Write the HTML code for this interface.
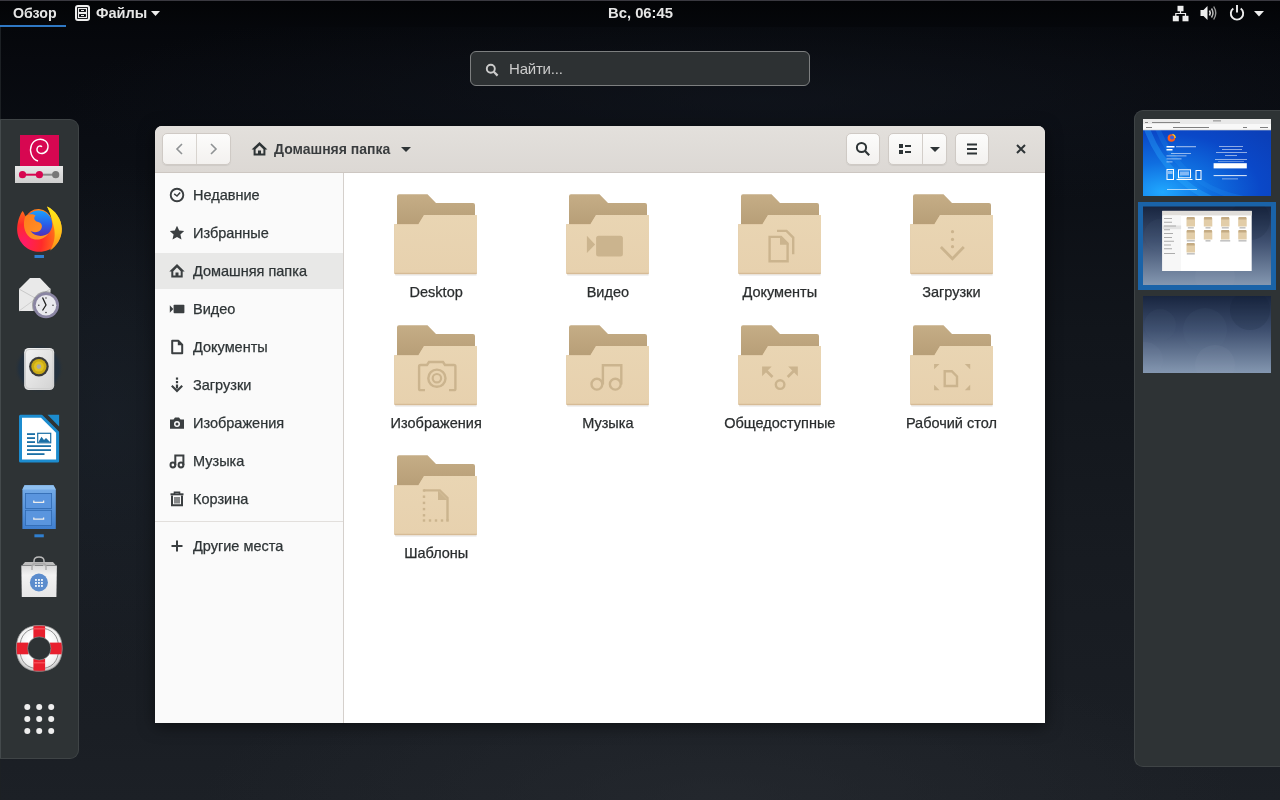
<!DOCTYPE html>
<html><head><meta charset="utf-8">
<style>
*{margin:0;padding:0;box-sizing:border-box}
html,body{width:1280px;height:800px;overflow:hidden}
body{position:relative;font-family:"Liberation Sans",sans-serif;background:#0b0e14}
.abs{position:absolute}
#bg{left:0;top:0;width:1280px;height:800px;
 background:
  radial-gradient(ellipse 520px 150px at 720px 800px, rgba(40,44,50,0.6), rgba(40,44,50,0) 100%),
  radial-gradient(ellipse 160px 260px at 110px 420px, rgba(30,38,48,0.45), rgba(30,38,48,0) 100%),
  radial-gradient(ellipse 700px 110px at 760px 100px, rgba(20,25,34,0.55), rgba(20,25,34,0) 100%),
  linear-gradient(180deg,#05070b 0px,#05070b 27px,#07090e 60px,#0a0d13 140px,#11151b 330px,#171b21 560px,#1a1e24 730px,#1c2026 800px);}
#topbar{left:0;top:0;width:1280px;height:27px;background:linear-gradient(#030406,#05070b);border-top:1px solid #3a3940}
.tb{color:#e6e6e6;font-weight:bold;font-size:14.2px;top:5px;white-space:nowrap;line-height:17px}
#search{left:470px;top:51px;width:340px;height:35px;border:1px solid #7d7f80;border-radius:6px;background:#2d3133}
#search .ph{left:38px;top:8px;color:#ccc;font-size:15px}
#dash{left:0;top:119px;width:79px;height:640px;background:#2e3335;border-radius:0 9px 9px 0;border:1px solid #3f4446;border-left:none}
#ws{left:1134px;top:110px;width:150px;height:657px;background:#2e3335;border-radius:9px 0 0 9px;border:1px solid #3f4446;border-right:none}
#win{left:155px;top:126px;width:890px;height:597px;background:#fff;border-radius:7px 7px 0 0;overflow:hidden;box-shadow:0 3px 16px rgba(0,0,0,0.5)}
#hb{left:0;top:0;width:890px;height:47px;background:linear-gradient(#e3e0dc,#dcd8d4);border-bottom:1px solid #cdc7c2}
.btn{background:linear-gradient(#fcfcfb,#f3f1ef);border:1px solid #cfcac5;border-radius:5px;box-shadow:0 1px 1px rgba(0,0,0,0.07)}
#side{left:0;top:47px;width:189px;height:550px;background:#fafafa;border-right:1px solid #d5d0cc}
.st{font-size:14.5px;color:#2e3436;white-space:nowrap;line-height:17px;-webkit-text-stroke:0.25px #2e3436}
.si .t{position:absolute;left:38px;top:10px;font-size:14.5px;color:#2e3436;white-space:nowrap}
.si svg{position:absolute;left:14px;top:11px}
.fl{font-size:14.5px;color:#2a2d2e;white-space:nowrap;text-align:center;line-height:17px;-webkit-text-stroke:0.25px #2a2d2e}
</style></head><body><div id="root" style="position:absolute;left:0;top:0;width:1280px;height:800px;will-change:transform">
<div id="bg" class="abs"></div>
<div id="topbar" class="abs"></div>
<div class="abs tb" style="left:13px">Обзор</div>
<div class="abs" style="left:0;top:25px;width:66px;height:2px;background:#2f78c4"></div>
<svg class="abs" style="left:75px;top:5px" width="15" height="16" viewBox="0 0 15 16"><rect x="1" y="1" width="13" height="14" rx="2" fill="none" stroke="#eee" stroke-width="2"/><rect x="3.5" y="3.5" width="8" height="4" fill="none" stroke="#eee" stroke-width="1.2"/><rect x="3.5" y="8.5" width="8" height="4" fill="none" stroke="#eee" stroke-width="1.2"/><path d="M6 5.5 L9 5.5 M6 10.5 L9 10.5" stroke="#eee" stroke-width="1"/></svg>
<div class="abs tb" style="left:96px;font-size:14.6px">Файлы</div>
<svg class="abs" style="left:151px;top:11px" width="9" height="5" viewBox="0 0 9 5"><path d="M0 0 L9 0 L4.5 5 Z" fill="#eee"/></svg>
<svg class="abs" style="left:1172px;top:5px" width="17" height="17" viewBox="0 0 17 17"><rect x="5.5" y="0.8" width="6" height="5.5" fill="#eee"/><rect x="0.8" y="10.8" width="6" height="5.5" fill="#eee"/><rect x="10.5" y="10.8" width="6" height="5.5" fill="#eee"/><path d="M8.5 6 L8.5 8.5 M3.8 11 L3.8 8.5 L13.5 8.5 L13.5 11" fill="none" stroke="#eee" stroke-width="1.2"/></svg>
<svg class="abs" style="left:1200px;top:5px" width="17" height="16" viewBox="0 0 17 16"><path d="M0.5 5 L3.5 5 L7.5 1 L7.5 15 L3.5 11 L0.5 11 Z" fill="#eee"/><path d="M9.5 5.5 Q11 8 9.5 10.5" fill="none" stroke="#ddd" stroke-width="1.6"/><path d="M11.5 3.5 Q14.5 8 11.5 12.5" fill="none" stroke="#bbb" stroke-width="1.5"/><path d="M13.7 1.5 Q17.8 8 13.7 14.5" fill="none" stroke="#999" stroke-width="1.4"/></svg>
<svg class="abs" style="left:1229px;top:4px" width="16" height="17" viewBox="0 0 16 17"><path d="M4.3 4.5 A6.2 6.2 0 1 0 11.7 4.5" fill="none" stroke="#eee" stroke-width="1.9"/><path d="M8 1 L8 8.5" stroke="#eee" stroke-width="1.9"/></svg>
<svg class="abs" style="left:1254px;top:11px" width="10" height="6" viewBox="0 0 10 6"><path d="M0 0 L10 0 L5 5.5 Z" fill="#eee"/></svg>
<div class="abs tb" style="left:608px;font-size:14.8px;top:5px">Вс, 06:45</div>

<div id="search" class="abs"><svg class="abs" style="left:14px;top:11px" width="14" height="14" viewBox="0 0 14 14"><circle cx="5.8" cy="5.8" r="4" fill="none" stroke="#ccc" stroke-width="1.9"/><path d="M8.8 8.8 L12.6 12.6" stroke="#ccc" stroke-width="2.2"/></svg><div class="abs ph" style="letter-spacing:-0.2px">Найти...</div></div>

<div class="abs" style="left:0;top:27px;width:1px;height:773px;background:#1c2024"></div>
<div id="dash" class="abs"></div>
<div class="abs" style="left:0;top:120px;width:1px;height:638px;background:#444a4c"></div>
<svg class="abs" style="left:0;top:0" width="80" height="800" viewBox="0 0 80 800">
<defs>
 <radialGradient id="ffo" cx="0.15" cy="0.8" r="1.0"><stop offset="0" stop-color="#ff1a6a"/><stop offset="0.4" stop-color="#ff2a2a"/><stop offset="0.7" stop-color="#ff6a1a"/><stop offset="1" stop-color="#ffae1a"/></radialGradient><linearGradient id="ffy" x1="0" y1="0" x2="0" y2="1"><stop offset="0" stop-color="#ffec1a"/><stop offset="0.6" stop-color="#ffc21a"/><stop offset="1" stop-color="#ff8a1a"/></linearGradient><linearGradient id="ffh" x1="0" y1="0" x2="1" y2="1"><stop offset="0" stop-color="#ff7a1a"/><stop offset="1" stop-color="#ff9a2a"/></linearGradient>
 <linearGradient id="ffb" x1="0" y1="0" x2="0" y2="1"><stop offset="0" stop-color="#1aa0ff"/><stop offset="0.55" stop-color="#2a5ae6"/><stop offset="1" stop-color="#5a28b0"/></linearGradient>
 <linearGradient id="gbar" x1="0" y1="0" x2="0" y2="1"><stop offset="0" stop-color="#e8e8e8"/><stop offset="1" stop-color="#cfcfcf"/></linearGradient>
 <linearGradient id="cab" x1="0" y1="0" x2="0" y2="1"><stop offset="0" stop-color="#78aee8"/><stop offset="1" stop-color="#3f7fd0"/></linearGradient>
 <linearGradient id="bag" x1="0" y1="0" x2="0" y2="1"><stop offset="0" stop-color="#d9d9d9"/><stop offset="0.3" stop-color="#f2f2f2"/><stop offset="1" stop-color="#e6e6e6"/></linearGradient>
 <linearGradient id="rbx" x1="0" y1="0" x2="1" y2="1"><stop offset="0" stop-color="#f4f4f4"/><stop offset="1" stop-color="#d2d2d2"/></linearGradient><radialGradient id="halo" cx="0.5" cy="0.5" r="0.5"><stop offset="0" stop-color="#1f2c3a"/><stop offset="0.8" stop-color="#23303d"/><stop offset="1" stop-color="#2e3335" stop-opacity="0"/></radialGradient>
</defs>
<!-- debian installer -->
<rect x="20" y="135" width="39" height="31" fill="#d70751"/>
<path d="M38 161 C31.5 159 29 151 31.5 145 C34 139.5 41 137.5 45.5 141 C49.5 144.5 48.5 151 44 153 C40.5 154.5 36.5 152.5 37 148.8 C37.4 146 40.5 145.2 42 146.8" fill="none" stroke="#fff" stroke-width="1.4"/>
<rect x="15" y="166" width="48" height="17" fill="url(#gbar)"/>
<path d="M22.5 174.7 L39.4 174.7" stroke="#d70751" stroke-width="2"/>
<path d="M39.4 174.7 L55.7 174.7" stroke="#8a8a8a" stroke-width="2"/>
<circle cx="22.5" cy="174.7" r="3.6" fill="#d70751"/><circle cx="39.4" cy="174.7" r="3.6" fill="#d70751"/><circle cx="55.7" cy="174.7" r="3.6" fill="#777"/>
<!-- firefox -->
<path d="M22.5 211 C18 218 17 225 17.2 231 C18 243 28 251.8 39.5 251.8 C52 251.8 61.8 242 61.8 229 C61.8 219 55 210 47 206.4 C49.5 211 51 215 51.5 219.5 A13.6 13.6 0 0 0 25.5 218 C25 215 24 212.5 22.5 211 Z" fill="url(#ffo)"/>
<path d="M47 206.4 C55 210 61.8 219 61.8 229 C61.8 238 57 246 50 250.5 C54.5 243 55.8 235 53.8 227 C52.2 219.5 50.5 213 47 206.4 Z" fill="url(#ffy)"/>
<circle cx="38.6" cy="224" r="13.6" fill="url(#ffb)"/>
<path d="M25.3 216 C29 213.5 33.5 214 35.5 215.5 C33 218 34.5 221 37.5 221.8 C41.5 222.5 43 226 41.2 229 C39 232.5 34 233 30.5 231 C34.5 236.5 42.5 237.5 48.5 233.5 C44.5 239.5 35.5 241.5 30 237.5 C24 233 22.5 224 25.3 216 Z" fill="url(#ffh)"/>
<rect x="34.5" y="255" width="9.5" height="3" fill="#2f7fd0"/>
<!-- evolution -->
<path d="M19 289 L30 278 L40 278 L50.5 289 L50.5 311 L19 311 Z" fill="#e9e9e9"/>
<path d="M19 289 L35 298 L50.5 289" fill="none" stroke="#c8c8c8" stroke-width="1"/>
<path d="M19 311 L34 300 M50.5 311 L38 300" stroke="#d0d0d0" stroke-width="1"/>
<circle cx="46" cy="305.3" r="14" fill="#2a2e30" opacity="0.35"/>
<circle cx="46" cy="305.3" r="13" fill="#8a85a3"/>
<circle cx="46" cy="305.3" r="10.3" fill="#e9e9ee"/>
<path d="M42.5 297.5 L46 305 L42.5 310.5" fill="none" stroke="#222" stroke-width="1.3"/>
<circle cx="46" cy="298" r="0.8" fill="#444"/><circle cx="53" cy="305.3" r="0.8" fill="#444"/><circle cx="46" cy="312.5" r="0.8" fill="#444"/><circle cx="38.8" cy="305.3" r="0.8" fill="#444"/>
<!-- rhythmbox -->
<circle cx="39" cy="368.5" r="25" fill="url(#halo)"/>
<rect x="24.2" y="348" width="30" height="42" rx="4.5" fill="url(#rbx)"/>
<rect x="25.5" y="349.5" width="27.5" height="39" rx="3.5" fill="none" stroke="#cfcfcf" stroke-width="1"/>
<circle cx="38.9" cy="366.6" r="9.8" fill="#3b3b3b"/>
<circle cx="38.9" cy="366.6" r="7.6" fill="#c9a915"/><circle cx="38.9" cy="366.6" r="5" fill="#e0c020"/>
<circle cx="38.9" cy="366.6" r="2.3" fill="#a9a9a9"/>
<!-- writer -->
<path d="M20.5 416.2 L41.5 416.2 L57.6 432.3 L57.6 461 L20.5 461 Z" fill="#fff" stroke="#1c8ccf" stroke-width="3" stroke-linejoin="round"/>
<path d="M47.5 414.7 L59.1 414.7 L59.1 426.4 Z" fill="#1c8ccf"/>
<g fill="#1a6fa6"><rect x="27" y="433.2" width="8" height="1.8"/><rect x="27" y="437.2" width="8" height="1.8"/><rect x="27" y="441.2" width="8" height="1.8"/><rect x="27" y="445.2" width="24" height="1.8"/><rect x="27" y="449.2" width="24" height="1.8"/><rect x="27" y="453.2" width="17.5" height="1.8"/></g>
<rect x="37.7" y="433.3" width="13" height="9.5" fill="none" stroke="#1a6fa6" stroke-width="1.2"/>
<path d="M38.3 442.3 L41.5 436.8 L44 440 L46 438 L50.3 442.3 Z" fill="#1a6fa6"/>
<!-- files cabinet -->
<path d="M24.5 485.2 L53.5 485.2 L55.8 489.5 L55.8 529 L22.4 529 L22.4 489.5 Z" fill="url(#cab)"/>
<path d="M24.5 485.2 L53.5 485.2 L55.8 489.5 L22.4 489.5 Z" fill="#8fc0f0"/>
<rect x="25.4" y="493.4" width="26.2" height="15" fill="#5a95de" stroke="#2f68b0" stroke-width="0.8"/>
<rect x="25.4" y="510.3" width="26.2" height="15.3" fill="#5a95de" stroke="#2f68b0" stroke-width="0.8"/>
<path d="M33.8 500.6 L33.8 502.4 L43.6 502.4 L43.6 500.6" fill="none" stroke="#eee" stroke-width="1.3"/>
<path d="M33.8 517.4 L33.8 519.2 L43.6 519.2 L43.6 517.4" fill="none" stroke="#eee" stroke-width="1.3"/>
<rect x="34.4" y="534.3" width="9.4" height="3" fill="#2f7fd0"/>
<!-- software bag -->
<path d="M34 566 L34 561 Q34 557 39 557 Q44 557 44 561 L44 566" fill="none" stroke="#bbb" stroke-width="1.5"/>
<path d="M22.5 565 L25 562 L53 562 L55.5 565 Z" fill="#bdbdbd"/>
<path d="M21.3 565.6 L56.9 565.6 L56.4 597.1 L21.8 597.1 Z" fill="url(#bag)"/>
<path d="M32 570 L32 567 Q32 563.5 35.5 563.5 L42.5 563.5 Q46 563.5 46 567 L46 570" fill="none" stroke="#aaa" stroke-width="1.4"/>
<circle cx="38.9" cy="582.5" r="9" fill="#5b8ccd"/>
<g fill="#e8f1fb"><rect x="35" y="579" width="1.9" height="1.9"/><rect x="38" y="579" width="1.9" height="1.9"/><rect x="41" y="579" width="1.9" height="1.9"/><rect x="35" y="582" width="1.9" height="1.9"/><rect x="38" y="582" width="1.9" height="1.9"/><rect x="41" y="582" width="1.9" height="1.9"/><rect x="35" y="585" width="1.9" height="1.9"/><rect x="38" y="585" width="1.9" height="1.9"/><rect x="41" y="585" width="1.9" height="1.9"/></g>
<!-- lifebuoy -->
<defs><clipPath id="lbc"><path d="M39.25 625.5 C54 625.5 62.2 633.5 62.2 648.4 C62.2 663.3 54 671.3 39.25 671.3 C24.5 671.3 16.3 663.3 16.3 648.4 C16.3 633.5 24.5 625.5 39.25 625.5 Z"/></clipPath>
<radialGradient id="lbg" cx="0.5" cy="0.45" r="0.55"><stop offset="0.5" stop-color="#ffffff"/><stop offset="0.85" stop-color="#f0f0f0"/><stop offset="1" stop-color="#c8c8c8"/></radialGradient></defs>
<path d="M39.25 625.5 C54 625.5 62.2 633.5 62.2 648.4 C62.2 663.3 54 671.3 39.25 671.3 C24.5 671.3 16.3 663.3 16.3 648.4 C16.3 633.5 24.5 625.5 39.25 625.5 Z" fill="url(#lbg)"/>
<path d="M39.25 628 C51.5 628 58.7 635 58.7 648.4 C58.7 661.8 51.5 668.8 39.25 668.8 C27 668.8 19.8 661.8 19.8 648.4 C19.8 635 27 628 39.25 628 Z" fill="none" stroke="#7a7a7a" stroke-width="0.8"/>
<g clip-path="url(#lbc)">
<rect x="33.4" y="624" width="11.7" height="14" fill="#e8202e"/><rect x="33.4" y="659" width="11.7" height="14" fill="#e8202e"/>
<rect x="15" y="642.6" width="13.5" height="11.7" fill="#e8202e"/><rect x="50" y="642.6" width="13.5" height="11.7" fill="#e8202e"/>
<rect x="33.4" y="628" width="11.7" height="1.5" fill="#ff6a72" opacity="0.6"/><rect x="33.4" y="662" width="11.7" height="1.5" fill="#ff6a72" opacity="0.6"/>
</g>
<path d="M39.25 625.5 C54 625.5 62.2 633.5 62.2 648.4 C62.2 663.3 54 671.3 39.25 671.3 C24.5 671.3 16.3 663.3 16.3 648.4 C16.3 633.5 24.5 625.5 39.25 625.5 Z" fill="none" stroke="#8d8d8d" stroke-width="0.7"/>
<circle cx="39.25" cy="648.4" r="11.6" fill="#2e3335" stroke="#9a9a9a" stroke-width="0.6"/>
<!-- app grid -->
<g fill="#eeeeee">
<circle cx="27.3" cy="706.9" r="3"/><circle cx="39.2" cy="706.9" r="3"/><circle cx="51.2" cy="706.9" r="3"/>
<circle cx="27.3" cy="718.9" r="3"/><circle cx="39.2" cy="718.9" r="3"/><circle cx="51.2" cy="718.9" r="3"/>
<circle cx="27.3" cy="730.9" r="3"/><circle cx="39.2" cy="730.9" r="3"/><circle cx="51.2" cy="730.9" r="3"/>
</g>
</svg>
<div id="ws" class="abs"></div>
<svg class="abs" style="left:1134px;top:110px" width="146" height="280" viewBox="1134 110 146 280">
<defs>
 <clipPath id="c3"><rect x="1143" y="296" width="128" height="77"/></clipPath><clipPath id="c2"><rect x="1143" y="206.5" width="128" height="78.5"/></clipPath><linearGradient id="wall" x1="0" y1="0" x2="0" y2="1"><stop offset="0" stop-color="#18253f"/><stop offset="0.45" stop-color="#3f5070"/><stop offset="1" stop-color="#8497b0"/></linearGradient>
 <radialGradient id="ffbg" cx="0.15" cy="0.95" r="1.1"><stop offset="0" stop-color="#20a8ff"/><stop offset="0.35" stop-color="#0f6ee0"/><stop offset="0.7" stop-color="#0a48c8"/><stop offset="1" stop-color="#0b3fb8"/></radialGradient>
</defs>
<!-- thumb 1: firefox -->
<rect x="1143" y="119" width="128" height="77" fill="url(#ffbg)"/>
<clipPath id="c1"><rect x="1143" y="130" width="128" height="66"/></clipPath>
<g clip-path="url(#c1)">
<circle cx="1262" cy="88" r="122" fill="none" stroke="#2ab0ff" stroke-width="6" opacity="0.35"/>
<circle cx="1262" cy="88" r="112" fill="none" stroke="#1e90f0" stroke-width="5" opacity="0.25"/>
</g>
<rect x="1143" y="119" width="128" height="5" fill="#e9e9e9"/>
<rect x="1143" y="124" width="128" height="6" fill="#f8f8f8"/>
<rect x="1143" y="129.6" width="128" height="0.7" fill="#cfcfcf"/>
<g fill="#444" opacity="0.75"><rect x="1145" y="122" width="3" height="0.8"/><rect x="1152" y="122" width="28" height="0.8"/><rect x="1213" y="120.5" width="8" height="0.8"/><rect x="1146" y="127" width="6" height="0.9"/><rect x="1173" y="127" width="36" height="0.9"/><rect x="1243" y="127" width="4" height="0.9"/><rect x="1260" y="127" width="8" height="0.9"/></g>
<circle cx="1171.4" cy="138" r="3.8" fill="#ff5a1a"/><circle cx="1172" cy="137.4" r="2" fill="#3a5fe0"/><path d="M1172.5 134.3 A3.8 3.8 0 0 1 1175.2 138" fill="none" stroke="#ffcc1a" stroke-width="1.2"/>
<g fill="#fff">
<rect x="1166.5" y="146" width="8" height="1.5"/><rect x="1176" y="146.3" width="20" height="0.9" opacity="0.75"/><rect x="1166.5" y="149" width="6" height="1.5"/>
<rect x="1171" y="153" width="20" height="0.8" opacity="0.7"/><rect x="1166.5" y="155.5" width="20" height="0.8" opacity="0.7"/><rect x="1166.5" y="158.5" width="15" height="0.8" opacity="0.7"/><rect x="1166.5" y="161.5" width="6" height="0.8" opacity="0.7"/>
<rect x="1167" y="189" width="30" height="0.9" opacity="0.7"/>
<rect x="1219" y="146" width="24" height="0.9" opacity="0.6"/><rect x="1222" y="149" width="20" height="0.9" opacity="0.6"/><rect x="1216" y="152" width="31" height="0.9" opacity="0.6"/><rect x="1225" y="155" width="12" height="0.9" opacity="0.6"/><rect x="1215" y="159" width="32" height="0.9" opacity="0.6"/><rect x="1218" y="161" width="26" height="0.7" opacity="0.5"/>
<rect x="1213.6" y="163.2" width="33.2" height="5.2"/><rect x="1213.6" y="175.2" width="33.2" height="0.9"/><rect x="1222" y="178.5" width="16" height="0.8" opacity="0.6"/></g>
<g fill="none" stroke="#fff" stroke-width="1">
<rect x="1167" y="169.5" width="6.5" height="10"/><rect x="1178.5" y="169.8" width="12" height="8"/><path d="M1176.5 179.5 L1192.5 179.5"/><rect x="1196" y="170.5" width="5" height="9"/>
</g>
<g fill="#cfe3ff" opacity="0.6"><rect x="1168" y="171" width="4.5" height="3"/><rect x="1180" y="171.5" width="9" height="4"/></g>
<!-- thumb 2: selected -->
<rect x="1138" y="202" width="138" height="88" fill="#1a63a8"/>
<rect x="1143" y="206.5" width="128" height="78.5" fill="url(#wall)"/>
<g clip-path="url(#c2)">
<circle cx="1160" cy="235" r="16" fill="#5a6c8a" opacity="0.09"/>
<circle cx="1250" cy="220" r="20" fill="#0e1a33" opacity="0.14"/>
<circle cx="1215" cy="277" r="20" fill="#9aaac0" opacity="0.09"/>
</g>
<rect x="1162.3" y="210.9" width="89.4" height="60.1" fill="#fff"/>
<rect x="1162.3" y="210.9" width="89.4" height="4.6" fill="#e0ddd9"/>
<rect x="1162.3" y="215.5" width="18.8" height="55.5" fill="#f7f7f7"/>
<rect x="1162.3" y="225.5" width="18.8" height="3.6" fill="#e3e3e3"/>
<g fill="#999"><rect x="1164" y="218" width="8" height="0.8"/><rect x="1164" y="221.8" width="8" height="0.8"/><rect x="1164" y="225.6" width="12" height="0.8"/><rect x="1164" y="229.4" width="6" height="0.8"/><rect x="1164" y="233.2" width="9" height="0.8"/><rect x="1164" y="237" width="8" height="0.8"/><rect x="1164" y="240.8" width="10" height="0.8"/><rect x="1164" y="244.6" width="7" height="0.8"/><rect x="1164" y="248.4" width="8" height="0.8"/><rect x="1164" y="253" width="11" height="0.8"/></g>
<g fill="#e2cda8">
<rect x="1186.5" y="218" width="8.5" height="8.5"/><rect x="1203.8" y="218" width="8.5" height="8.5"/><rect x="1221" y="218" width="8.5" height="8.5"/><rect x="1238.2" y="218" width="8.5" height="8.5"/>
<rect x="1186.5" y="231" width="8.5" height="8.5"/><rect x="1203.8" y="231" width="8.5" height="8.5"/><rect x="1221" y="231" width="8.5" height="8.5"/><rect x="1238.2" y="231" width="8.5" height="8.5"/>
<rect x="1186.5" y="244" width="8.5" height="8.5"/>
</g>
<g fill="#c4ab83">
<rect x="1186.8" y="217" width="7.8" height="2.5"/><rect x="1204.1" y="217" width="7.8" height="2.5"/><rect x="1221.3" y="217" width="7.8" height="2.5"/><rect x="1238.5" y="217" width="7.8" height="2.5"/>
<rect x="1186.8" y="230" width="7.8" height="2.5"/><rect x="1204.1" y="230" width="7.8" height="2.5"/><rect x="1221.3" y="230" width="7.8" height="2.5"/><rect x="1238.5" y="230" width="7.8" height="2.5"/>
<rect x="1186.8" y="243" width="7.8" height="2.5"/>
</g>
<rect x="1187.8" y="227.5" width="6" height="0.8" fill="#888"/><rect x="1205.5" y="227.5" width="5" height="0.8" fill="#888"/><rect x="1221.8" y="227.5" width="7" height="0.8" fill="#888"/><rect x="1239.5" y="227.5" width="6" height="0.8" fill="#888"/><rect x="1186.8" y="240.5" width="8" height="0.8" fill="#888"/><rect x="1205.5" y="240.5" width="5" height="0.8" fill="#888"/><rect x="1220.2" y="240.5" width="10" height="0.8" fill="#888"/><rect x="1238.5" y="240.5" width="8" height="0.8" fill="#888"/><rect x="1186.8" y="253.5" width="8" height="0.8" fill="#888"/>
<!-- thumb 3 -->
<rect x="1143" y="296" width="128" height="77" fill="url(#wall)"/>
<g clip-path="url(#c3)">
<circle cx="1160" cy="325" r="16" fill="#5a6c8a" opacity="0.09"/>
<circle cx="1205" cy="330" r="22" fill="#6a7d9a" opacity="0.08"/>
<circle cx="1250" cy="310" r="20" fill="#0e1a33" opacity="0.14"/>
<circle cx="1215" cy="365" r="20" fill="#9aaac0" opacity="0.09"/>
<circle cx="1145" cy="360" r="18" fill="#8a9bb2" opacity="0.07"/>
</g>
</svg>


<div id="win" class="abs">

  <div id="hb" class="abs">
    <div class="abs btn" style="left:7px;top:7px;width:69px;height:32px"></div>
    <div class="abs" style="left:41px;top:8px;width:1px;height:30px;background:#d8d4cf"></div>
    <svg class="abs" style="left:17px;top:15px" width="16" height="16" viewBox="0 0 16 16"><path d="M10 3 L5 8 L10 13" fill="none" stroke="#8f9294" stroke-width="1.6"/></svg>
    <svg class="abs" style="left:50px;top:15px" width="16" height="16" viewBox="0 0 16 16"><path d="M6 3 L11 8 L6 13" fill="none" stroke="#8f9294" stroke-width="1.6"/></svg>
    <svg class="abs" style="left:96px;top:15px" width="17" height="16" viewBox="0 0 17 16"><path d="M8.5 1 L0.6 8.6 L2.6 8.6 L2.6 14.6 L14.4 14.6 L14.4 8.6 L16.4 8.6 Z M4.6 8.2 L8.5 4.4 L12.4 8.2 L12.4 12.6 L10 12.6 L10 9.6 L7 9.6 L7 12.6 L4.6 12.6 Z" fill="#2e3436" fill-rule="evenodd"/></svg>
    <div class="abs" style="left:119px;top:15px;font-size:14px;font-weight:bold;color:#393c3e;white-space:nowrap">Домашняя папка</div>
    <svg class="abs" style="left:246px;top:21px" width="10" height="5" viewBox="0 0 10 5"><path d="M0 0 L10 0 L5 5 Z" fill="#2e3436"/></svg>
    <div class="abs btn" style="left:691px;top:7px;width:34px;height:32px"></div>
    <svg class="abs" style="left:700px;top:15px" width="16" height="16" viewBox="0 0 16 16"><circle cx="6.5" cy="6.5" r="4.6" fill="none" stroke="#2e3436" stroke-width="2"/><path d="M9.8 9.8 L14.2 14.2" stroke="#2e3436" stroke-width="2.2"/></svg>
    <div class="abs btn" style="left:733px;top:7px;width:59px;height:32px"></div>
    <div class="abs" style="left:767px;top:8px;width:1px;height:30px;background:#d3cec9"></div>
    <svg class="abs" style="left:743px;top:17px" width="14" height="12" viewBox="0 0 14 12"><rect x="1" y="1" width="4" height="4" fill="#2e3436"/><rect x="1" y="7" width="4" height="4" fill="#2e3436"/><rect x="7" y="2" width="6" height="2" fill="#2e3436"/><rect x="7" y="8" width="6" height="2" fill="#2e3436"/></svg>
    <svg class="abs" style="left:775px;top:21px" width="10" height="5" viewBox="0 0 10 5"><path d="M0 0 L10 0 L5 5 Z" fill="#2e3436"/></svg>
    <div class="abs btn" style="left:800px;top:7px;width:34px;height:32px"></div>
    <svg class="abs" style="left:811px;top:16px" width="12" height="14" viewBox="0 0 12 14"><rect x="1" y="1.5" width="10" height="2" fill="#2e3436"/><rect x="1" y="6" width="10" height="2" fill="#2e3436"/><rect x="1" y="10.5" width="10" height="2" fill="#2e3436"/></svg>
    <svg class="abs" style="left:860px;top:17px" width="12" height="12" viewBox="0 0 12 12"><path d="M2 2 L10 10 M10 2 L2 10" stroke="#2e3436" stroke-width="2"/></svg>
  </div>
  <div id="side" class="abs">
    <div class="abs" style="left:0;top:80px;width:188px;height:36px;background:#e8e8e7"></div>
    <svg class="abs" style="left:14px;top:14px" width="16" height="16" viewBox="0 0 16 16"><circle cx="8" cy="8" r="6.3" fill="none" stroke="#3b3f41" stroke-width="1.9"/><path d="M5.2 6.8 L8 9 L11.2 5.6" fill="none" stroke="#3b3f41" stroke-width="1.5"/></svg>
    <div class="abs st" style="left:38px;top:14px">Недавние</div>
    <svg class="abs" style="left:14px;top:52px" width="16" height="16" viewBox="0 0 16 16"><path d="M8 0.8 L10.2 5.5 L15.2 6 L11.4 9.4 L12.5 14.5 L8 11.9 L3.5 14.5 L4.6 9.4 L0.8 6 L5.8 5.5 Z" fill="#3b3f41"/></svg>
    <div class="abs st" style="left:38px;top:52px">Избранные</div>
    <svg class="abs" style="left:14px;top:90px" width="16" height="16" viewBox="0 0 16 16"><path d="M8 1 L0.3 8.6 L2.3 8.6 L2.3 14.6 L13.7 14.6 L13.7 8.6 L15.7 8.6 Z M4.3 8.2 L8 4.5 L11.7 8.2 L11.7 12.6 L9.5 12.6 L9.5 9.6 L6.5 9.6 L6.5 12.6 L4.3 12.6 Z" fill="#3b3f41" fill-rule="evenodd"/></svg>
    <div class="abs st" style="left:38px;top:90px">Домашняя папка</div>
    <svg class="abs" style="left:14px;top:128px" width="16" height="16" viewBox="0 0 16 16"><path d="M0.8 4.3 L4.3 8 L0.8 11.7 Z" fill="#3b3f41"/><rect x="4.6" y="3.8" width="10.8" height="8.4" rx="0.8" fill="#3b3f41"/></svg>
    <div class="abs st" style="left:38px;top:128px">Видео</div>
    <svg class="abs" style="left:14px;top:166px" width="16" height="16" viewBox="0 0 16 16"><path d="M3.2 1.8 L9.3 1.8 L13.2 5.7 L13.2 14.2 L3.2 14.2 Z" fill="none" stroke="#3b3f41" stroke-width="2" stroke-linejoin="round"/><path d="M8.8 1.5 L13.5 6.2 L8.8 6.2 Z" fill="#3b3f41"/></svg>
    <div class="abs st" style="left:38px;top:166px">Документы</div>
    <svg class="abs" style="left:14px;top:204px" width="16" height="16" viewBox="0 0 16 16"><rect x="6.9" y="0.5" width="2.2" height="2.2" fill="#3b3f41"/><rect x="6.9" y="4" width="2.2" height="2.2" fill="#3b3f41"/><rect x="6.9" y="7.5" width="2.2" height="4" fill="#3b3f41"/><path d="M2.8 8.8 L8 14 L13.2 8.8" fill="none" stroke="#3b3f41" stroke-width="2.1"/></svg>
    <div class="abs st" style="left:38px;top:204px">Загрузки</div>
    <svg class="abs" style="left:14px;top:242px" width="16" height="16" viewBox="0 0 16 16"><path d="M1 4.5 L4.5 4.5 L6 2.5 L10 2.5 L11.5 4.5 L15 4.5 L15 13.8 L1 13.8 Z" fill="#3b3f41"/><circle cx="8" cy="9" r="3" fill="#fafafa"/><circle cx="8" cy="9" r="1.5" fill="#3b3f41"/></svg>
    <div class="abs st" style="left:38px;top:242px">Изображения</div>
    <svg class="abs" style="left:14px;top:280px" width="16" height="16" viewBox="0 0 16 16"><circle cx="3.9" cy="12" r="2.4" fill="none" stroke="#3b3f41" stroke-width="2"/><circle cx="12" cy="12" r="2.4" fill="none" stroke="#3b3f41" stroke-width="2"/><path d="M6.3 12 L6.3 2.6 L14.4 2.6 L14.4 12" fill="none" stroke="#3b3f41" stroke-width="2"/></svg>
    <div class="abs st" style="left:38px;top:280px">Музыка</div>
    <svg class="abs" style="left:14px;top:318px" width="16" height="16" viewBox="0 0 16 16"><path d="M1.5 3.3 L14.5 3.3" stroke="#3b3f41" stroke-width="2"/><path d="M5.5 3 L5.5 1.2 L10.5 1.2 L10.5 3" fill="none" stroke="#3b3f41" stroke-width="1.6"/><path d="M3 4.5 L3 14.3 L13 14.3 L13 4.5" fill="none" stroke="#3b3f41" stroke-width="2"/><path d="M6 6 L6 12.5 M8 6 L8 12.5 M10 6 L10 12.5" stroke="#3b3f41" stroke-width="1.2"/></svg>
    <div class="abs st" style="left:38px;top:318px">Корзина</div>
    <div class="abs" style="left:0;top:348px;width:188px;height:1px;background:#e2dfdc"></div>
    <svg class="abs" style="left:14px;top:365px" width="16" height="16" viewBox="0 0 16 16"><path d="M8 2.5 L8 13.5 M2.5 8 L13.5 8" stroke="#3b3f41" stroke-width="2"/></svg>
    <div class="abs st" style="left:38px;top:365px">Другие места</div>
  </div>
  <div id="main" class="abs" style="left:189px;top:47px;width:701px;height:550px">
    <div class="abs" style="left:50.4px;top:21.3px;width:88px;height:88px"><svg width="88" height="88" viewBox="0 0 88 88">
<defs>
<linearGradient id="gb" x1="0" y1="0" x2="0" y2="1"><stop offset="0" stop-color="#c5ad86"/><stop offset="1" stop-color="#b39a73"/></linearGradient>
<linearGradient id="gf" x1="0" y1="0" x2="0" y2="1"><stop offset="0" stop-color="#e9d5b3"/><stop offset="1" stop-color="#e7d1ae"/></linearGradient>
</defs>
<path d="M3 2.3 Q3 0.3 5 0.3 L33.5 0.3 L42 9 L79 9 Q81 9 81 11 L81 40 L3 40 Z" fill="url(#gb)"/>
<rect x="1" y="79" width="82" height="3" rx="1.5" fill="#000" opacity="0.06"/><path d="M0.2 30.3 L24.4 30.3 L30 21 L83 21 L83 79 Q83 80.3 81.7 80.3 L1.5 80.3 Q0.2 80.3 0.2 79 Z" fill="#d6bb96"/>
<path d="M0.2 30.3 L24.4 30.3 L30 21 L83 21 L83 78.8 L0.2 78.8 Z" fill="url(#gf)"/>

</svg></div>
    <div class="abs fl" style="left:32.2px;top:110.7px;width:120px">Desktop</div>
    <div class="abs" style="left:222.1px;top:21.3px;width:88px;height:88px"><svg width="88" height="88" viewBox="0 0 88 88">
<defs>
<linearGradient id="gb" x1="0" y1="0" x2="0" y2="1"><stop offset="0" stop-color="#c5ad86"/><stop offset="1" stop-color="#b39a73"/></linearGradient>
<linearGradient id="gf" x1="0" y1="0" x2="0" y2="1"><stop offset="0" stop-color="#e9d5b3"/><stop offset="1" stop-color="#e7d1ae"/></linearGradient>
</defs>
<path d="M3 2.3 Q3 0.3 5 0.3 L33.5 0.3 L42 9 L79 9 Q81 9 81 11 L81 40 L3 40 Z" fill="url(#gb)"/>
<rect x="1" y="79" width="82" height="3" rx="1.5" fill="#000" opacity="0.06"/><path d="M0.2 30.3 L24.4 30.3 L30 21 L83 21 L83 79 Q83 80.3 81.7 80.3 L1.5 80.3 Q0.2 80.3 0.2 79 Z" fill="#d6bb96"/>
<path d="M0.2 30.3 L24.4 30.3 L30 21 L83 21 L83 78.8 L0.2 78.8 Z" fill="url(#gf)"/>
<path d="M20.9 41.7 L29.1 50.4 L20.9 59.1 Z" fill="#cbb48e"/><rect x="30.1" y="41.8" width="26.8" height="20.7" rx="2.5" fill="#cbb48e"/>
</svg></div>
    <div class="abs fl" style="left:203.9px;top:110.7px;width:120px">Видео</div>
    <div class="abs" style="left:394.0px;top:21.3px;width:88px;height:88px"><svg width="88" height="88" viewBox="0 0 88 88">
<defs>
<linearGradient id="gb" x1="0" y1="0" x2="0" y2="1"><stop offset="0" stop-color="#c5ad86"/><stop offset="1" stop-color="#b39a73"/></linearGradient>
<linearGradient id="gf" x1="0" y1="0" x2="0" y2="1"><stop offset="0" stop-color="#e9d5b3"/><stop offset="1" stop-color="#e7d1ae"/></linearGradient>
</defs>
<path d="M3 2.3 Q3 0.3 5 0.3 L33.5 0.3 L42 9 L79 9 Q81 9 81 11 L81 40 L3 40 Z" fill="url(#gb)"/>
<rect x="1" y="79" width="82" height="3" rx="1.5" fill="#000" opacity="0.06"/><path d="M0.2 30.3 L24.4 30.3 L30 21 L83 21 L83 79 Q83 80.3 81.7 80.3 L1.5 80.3 Q0.2 80.3 0.2 79 Z" fill="#d6bb96"/>
<path d="M0.2 30.3 L24.4 30.3 L30 21 L83 21 L83 78.8 L0.2 78.8 Z" fill="url(#gf)"/>
<path d="M31.6 42.9 L43 42.9 L49.6 49.5 L49.6 67.3 L31.6 67.3 Z" fill="none" stroke="#cbb48e" stroke-width="2.4"/><path d="M42 42 L50.8 50.8 L42 50.8 Z" fill="#cbb48e"/><path d="M39 36.9 L48.5 36.9 L55.2 43.6 L55.2 60.2" fill="none" stroke="#cbb48e" stroke-width="2.4"/>
</svg></div>
    <div class="abs fl" style="left:375.8px;top:110.7px;width:120px">Документы</div>
    <div class="abs" style="left:565.6px;top:21.3px;width:88px;height:88px"><svg width="88" height="88" viewBox="0 0 88 88">
<defs>
<linearGradient id="gb" x1="0" y1="0" x2="0" y2="1"><stop offset="0" stop-color="#c5ad86"/><stop offset="1" stop-color="#b39a73"/></linearGradient>
<linearGradient id="gf" x1="0" y1="0" x2="0" y2="1"><stop offset="0" stop-color="#e9d5b3"/><stop offset="1" stop-color="#e7d1ae"/></linearGradient>
</defs>
<path d="M3 2.3 Q3 0.3 5 0.3 L33.5 0.3 L42 9 L79 9 Q81 9 81 11 L81 40 L3 40 Z" fill="url(#gb)"/>
<rect x="1" y="79" width="82" height="3" rx="1.5" fill="#000" opacity="0.06"/><path d="M0.2 30.3 L24.4 30.3 L30 21 L83 21 L83 79 Q83 80.3 81.7 80.3 L1.5 80.3 Q0.2 80.3 0.2 79 Z" fill="#d6bb96"/>
<path d="M0.2 30.3 L24.4 30.3 L30 21 L83 21 L83 78.8 L0.2 78.8 Z" fill="url(#gf)"/>
<circle cx="42.5" cy="37.7" r="1.6" fill="#cbb48e"/><circle cx="42.5" cy="45.4" r="1.6" fill="#cbb48e"/><circle cx="42.5" cy="52.7" r="1.6" fill="#cbb48e"/><path d="M30.9 53.1 L42.4 64.7 L53.8 53.1" fill="none" stroke="#cbb48e" stroke-width="2.8"/>
</svg></div>
    <div class="abs fl" style="left:547.4px;top:110.7px;width:120px">Загрузки</div>
    <div class="abs" style="left:50.4px;top:152.3px;width:88px;height:88px"><svg width="88" height="88" viewBox="0 0 88 88">
<defs>
<linearGradient id="gb" x1="0" y1="0" x2="0" y2="1"><stop offset="0" stop-color="#c5ad86"/><stop offset="1" stop-color="#b39a73"/></linearGradient>
<linearGradient id="gf" x1="0" y1="0" x2="0" y2="1"><stop offset="0" stop-color="#e9d5b3"/><stop offset="1" stop-color="#e7d1ae"/></linearGradient>
</defs>
<path d="M3 2.3 Q3 0.3 5 0.3 L33.5 0.3 L42 9 L79 9 Q81 9 81 11 L81 40 L3 40 Z" fill="url(#gb)"/>
<rect x="1" y="79" width="82" height="3" rx="1.5" fill="#000" opacity="0.06"/><path d="M0.2 30.3 L24.4 30.3 L30 21 L83 21 L83 79 Q83 80.3 81.7 80.3 L1.5 80.3 Q0.2 80.3 0.2 79 Z" fill="#d6bb96"/>
<path d="M0.2 30.3 L24.4 30.3 L30 21 L83 21 L83 78.8 L0.2 78.8 Z" fill="url(#gf)"/>
<path d="M31 65.1 L26.5 65.1 Q25.1 65.1 25.1 63.7 L25.1 41.5 Q25.1 40 26.6 40 L33 40 L35 37 L49 37 L51 40 L59.9 40 Q61.4 40 61.4 41.5 L61.4 63.7 Q61.4 65.1 60 65.1 L55 65.1" fill="none" stroke="#cbb48e" stroke-width="2.4"/><circle cx="42.9" cy="53.2" r="8.6" fill="none" stroke="#cbb48e" stroke-width="2.4"/><circle cx="42.9" cy="53.2" r="4.2" fill="none" stroke="#cbb48e" stroke-width="2.2"/>
</svg></div>
    <div class="abs fl" style="left:32.2px;top:241.7px;width:120px">Изображения</div>
    <div class="abs" style="left:222.1px;top:152.3px;width:88px;height:88px"><svg width="88" height="88" viewBox="0 0 88 88">
<defs>
<linearGradient id="gb" x1="0" y1="0" x2="0" y2="1"><stop offset="0" stop-color="#c5ad86"/><stop offset="1" stop-color="#b39a73"/></linearGradient>
<linearGradient id="gf" x1="0" y1="0" x2="0" y2="1"><stop offset="0" stop-color="#e9d5b3"/><stop offset="1" stop-color="#e7d1ae"/></linearGradient>
</defs>
<path d="M3 2.3 Q3 0.3 5 0.3 L33.5 0.3 L42 9 L79 9 Q81 9 81 11 L81 40 L3 40 Z" fill="url(#gb)"/>
<rect x="1" y="79" width="82" height="3" rx="1.5" fill="#000" opacity="0.06"/><path d="M0.2 30.3 L24.4 30.3 L30 21 L83 21 L83 79 Q83 80.3 81.7 80.3 L1.5 80.3 Q0.2 80.3 0.2 79 Z" fill="#d6bb96"/>
<path d="M0.2 30.3 L24.4 30.3 L30 21 L83 21 L83 78.8 L0.2 78.8 Z" fill="url(#gf)"/>
<circle cx="30.9" cy="59.2" r="5.4" fill="none" stroke="#cbb48e" stroke-width="2.4"/><circle cx="49.3" cy="59.2" r="5.4" fill="none" stroke="#cbb48e" stroke-width="2.4"/><path d="M36.9 59.5 L36.9 40.3 L55.3 40.3 L55.3 59.5" fill="none" stroke="#cbb48e" stroke-width="2.4"/>
</svg></div>
    <div class="abs fl" style="left:203.9px;top:241.7px;width:120px">Музыка</div>
    <div class="abs" style="left:394.0px;top:152.3px;width:88px;height:88px"><svg width="88" height="88" viewBox="0 0 88 88">
<defs>
<linearGradient id="gb" x1="0" y1="0" x2="0" y2="1"><stop offset="0" stop-color="#c5ad86"/><stop offset="1" stop-color="#b39a73"/></linearGradient>
<linearGradient id="gf" x1="0" y1="0" x2="0" y2="1"><stop offset="0" stop-color="#e9d5b3"/><stop offset="1" stop-color="#e7d1ae"/></linearGradient>
</defs>
<path d="M3 2.3 Q3 0.3 5 0.3 L33.5 0.3 L42 9 L79 9 Q81 9 81 11 L81 40 L3 40 Z" fill="url(#gb)"/>
<rect x="1" y="79" width="82" height="3" rx="1.5" fill="#000" opacity="0.06"/><path d="M0.2 30.3 L24.4 30.3 L30 21 L83 21 L83 79 Q83 80.3 81.7 80.3 L1.5 80.3 Q0.2 80.3 0.2 79 Z" fill="#d6bb96"/>
<path d="M0.2 30.3 L24.4 30.3 L30 21 L83 21 L83 78.8 L0.2 78.8 Z" fill="url(#gf)"/>
<circle cx="42.1" cy="59.6" r="4.3" fill="none" stroke="#cbb48e" stroke-width="2.4"/><path d="M34.5 52 L28 45.5" stroke="#cbb48e" stroke-width="2.6"/><path d="M24.1 41.6 L33.7 41.6 L24.1 51.2 Z" fill="#cbb48e"/><path d="M49.7 52 L56.2 45.5" stroke="#cbb48e" stroke-width="2.6"/><path d="M59.8 41.6 L50.2 41.6 L59.8 51.2 Z" fill="#cbb48e"/>
</svg></div>
    <div class="abs fl" style="left:375.8px;top:241.7px;width:120px">Общедоступные</div>
    <div class="abs" style="left:565.6px;top:152.3px;width:88px;height:88px"><svg width="88" height="88" viewBox="0 0 88 88">
<defs>
<linearGradient id="gb" x1="0" y1="0" x2="0" y2="1"><stop offset="0" stop-color="#c5ad86"/><stop offset="1" stop-color="#b39a73"/></linearGradient>
<linearGradient id="gf" x1="0" y1="0" x2="0" y2="1"><stop offset="0" stop-color="#e9d5b3"/><stop offset="1" stop-color="#e7d1ae"/></linearGradient>
</defs>
<path d="M3 2.3 Q3 0.3 5 0.3 L33.5 0.3 L42 9 L79 9 Q81 9 81 11 L81 40 L3 40 Z" fill="url(#gb)"/>
<rect x="1" y="79" width="82" height="3" rx="1.5" fill="#000" opacity="0.06"/><path d="M0.2 30.3 L24.4 30.3 L30 21 L83 21 L83 79 Q83 80.3 81.7 80.3 L1.5 80.3 Q0.2 80.3 0.2 79 Z" fill="#d6bb96"/>
<path d="M0.2 30.3 L24.4 30.3 L30 21 L83 21 L83 78.8 L0.2 78.8 Z" fill="url(#gf)"/>
<path d="M34.7 46.2 L41.8 46.2 L47 51.4 L47 61 L34.7 61 Z" fill="none" stroke="#cbb48e" stroke-width="2.4"/><path d="M24.1 38.9 L29.5 38.9 L24.1 44.3 Z M60.2 38.9 L54.8 38.9 L60.2 44.3 Z M24.1 65.2 L29.5 65.2 L24.1 59.8 Z M60.2 65.2 L54.8 65.2 L60.2 59.8 Z" fill="#cbb48e"/>
</svg></div>
    <div class="abs fl" style="left:547.4px;top:241.7px;width:120px">Рабочий стол</div>
    <div class="abs" style="left:50.4px;top:282.4px;width:88px;height:88px"><svg width="88" height="88" viewBox="0 0 88 88">
<defs>
<linearGradient id="gb" x1="0" y1="0" x2="0" y2="1"><stop offset="0" stop-color="#c5ad86"/><stop offset="1" stop-color="#b39a73"/></linearGradient>
<linearGradient id="gf" x1="0" y1="0" x2="0" y2="1"><stop offset="0" stop-color="#e9d5b3"/><stop offset="1" stop-color="#e7d1ae"/></linearGradient>
</defs>
<path d="M3 2.3 Q3 0.3 5 0.3 L33.5 0.3 L42 9 L79 9 Q81 9 81 11 L81 40 L3 40 Z" fill="url(#gb)"/>
<rect x="1" y="79" width="82" height="3" rx="1.5" fill="#000" opacity="0.06"/><path d="M0.2 30.3 L24.4 30.3 L30 21 L83 21 L83 79 Q83 80.3 81.7 80.3 L1.5 80.3 Q0.2 80.3 0.2 79 Z" fill="#d6bb96"/>
<path d="M0.2 30.3 L24.4 30.3 L30 21 L83 21 L83 78.8 L0.2 78.8 Z" fill="url(#gf)"/>
<path d="M30 35.4 L45.8 35.4 L53.5 43.1 L53.5 65.5" fill="none" stroke="#cbb48e" stroke-width="2.4"/><path d="M44 35.4 L53.5 44.9 L44 44.9 Z" fill="#cbb48e"/><rect x="28.8" y="34.3" width="2.4" height="2.4" fill="#cbb48e"/><rect x="28.8" y="40.5" width="2.4" height="2.4" fill="#cbb48e"/><rect x="28.8" y="46.7" width="2.4" height="2.4" fill="#cbb48e"/><rect x="28.8" y="52.9" width="2.4" height="2.4" fill="#cbb48e"/><rect x="28.8" y="59.1" width="2.4" height="2.4" fill="#cbb48e"/><rect x="28.8" y="64.3" width="2.4" height="2.4" fill="#cbb48e"/><rect x="34.8" y="64.3" width="2.4" height="2.4" fill="#cbb48e"/><rect x="40.8" y="64.3" width="2.4" height="2.4" fill="#cbb48e"/><rect x="46.8" y="64.3" width="2.4" height="2.4" fill="#cbb48e"/><rect x="52.3" y="64.3" width="2.4" height="2.4" fill="#cbb48e"/>
</svg></div>
    <div class="abs fl" style="left:32.2px;top:371.8px;width:120px">Шаблоны</div>
  </div>
</div>
</div></body></html>
